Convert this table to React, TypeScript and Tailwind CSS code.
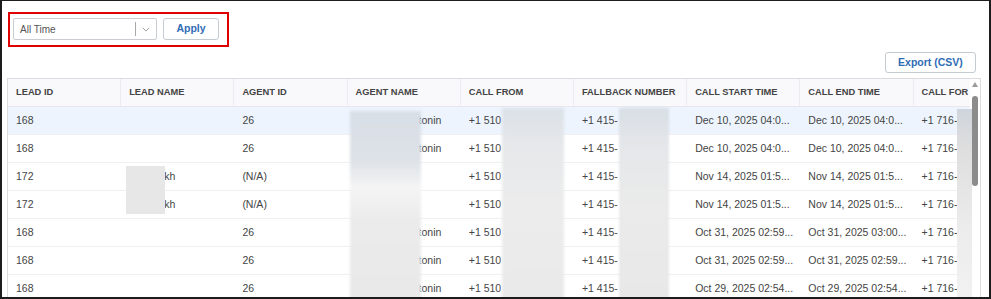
import React from "react";

const headers = [
  "LEAD ID",
  "LEAD NAME",
  "AGENT ID",
  "AGENT NAME",
  "CALL FROM",
  "FALLBACK NUMBER",
  "CALL START TIME",
  "CALL END TIME",
  "CALL FOR",
];

type Row = {
  leadId: string;
  leadName: string;
  agentId: string;
  agentName: string;
  start: string;
  end: string;
};

const rows: Row[] = [
  { leadId: "168", leadName: "", agentId: "26", agentName: "tonin", start: "Dec 10, 2025 04:0...", end: "Dec 10, 2025 04:0..." },
  { leadId: "168", leadName: "", agentId: "26", agentName: "tonin", start: "Dec 10, 2025 04:0...", end: "Dec 10, 2025 04:0..." },
  { leadId: "172", leadName: "kh", agentId: "(N/A)", agentName: "", start: "Nov 14, 2025 01:5...", end: "Nov 14, 2025 01:5..." },
  { leadId: "172", leadName: "kh", agentId: "(N/A)", agentName: "", start: "Nov 14, 2025 01:5...", end: "Nov 14, 2025 01:5..." },
  { leadId: "168", leadName: "", agentId: "26", agentName: "tonin", start: "Oct 31, 2025 02:59...", end: "Oct 31, 2025 03:00..." },
  { leadId: "168", leadName: "", agentId: "26", agentName: "tonin", start: "Oct 31, 2025 02:59...", end: "Oct 31, 2025 02:59..." },
  { leadId: "168", leadName: "", agentId: "26", agentName: "tonin", start: "Oct 29, 2025 02:54...", end: "Oct 29, 2025 02:54..." },
];

function Cell({ children }: { children?: React.ReactNode }) {
  return (
    <div className="flex items-center px-[8px] whitespace-nowrap overflow-visible">{children}</div>
  );
}

export default function App() {
  return (
    <div className="w-[991px] h-[299px] overflow-hidden bg-white border-[#1c1c1c] border-t border-l-2 border-r-2 border-b-2 font-['Liberation_Sans',Arial,sans-serif] text-[#444]">
      {/* Filter bar */}
      <div className="pt-[11px] pl-[6px]">
        <div className="inline-flex items-center gap-[6px] border-2 border-[#e10000] pl-[3px] pr-[8px] pt-[4px] pb-[5px]">
          <div className="w-[144px] h-[22px] border border-[#c9cdd2] rounded-[2px] flex items-center bg-white">
            <span className="flex-1 pl-[6px] text-[10px] text-[#555]">All Time</span>
            <div className="w-px h-[14px] bg-[#a8a8a8]" />
            <div className="w-[20px] flex items-center justify-center">
              <svg width="8" height="5" viewBox="0 0 8 5" fill="none">
                <path d="M0.8 0.8 L4 4 L7.2 0.8" stroke="#a0a0a0" strokeWidth="1" />
              </svg>
            </div>
          </div>
          <button className="w-[56px] h-[22px] border border-[#c5cbd3] rounded-[3px] bg-white text-[10.5px] font-bold text-[#2f6db5] flex items-center justify-center">
            Apply
          </button>
        </div>
      </div>

      {/* Export */}
      <div className="flex justify-end pr-[13px] mt-[5px]">
        <button className="w-[91px] h-[21px] border border-[#c5cbd3] rounded-[3px] bg-white text-[10.5px] font-bold text-[#2f6db5] flex items-center justify-center">
          Export (CSV)
        </button>
      </div>

      {/* Table */}
      <div className="relative mt-[5px] ml-[5px] w-[974px] h-[230px] border-t border-l border-r border-[#dcdce0] flex overflow-hidden">
        <div className="flex-1 overflow-hidden">
          <div className="grid grid-cols-[repeat(9,113.2px)] h-[28px] bg-[#f9f9fb] border-b border-[#e8e8ec] text-[9.3px] font-bold text-[#444]">
            {headers.map((h) => (
              <div key={h} className="flex items-center px-[8px] whitespace-nowrap border-r border-[#ececf0]">
                {h}
              </div>
            ))}
          </div>
          {rows.map((r, i) => (
            <div
              key={i}
              className={
                "grid grid-cols-[repeat(9,113.2px)] h-[28px] border-b border-[#f0f0f2] text-[10.5px] text-[#444] " +
                (i === 0 ? "bg-[#edf4fd]" : "bg-white")
              }
            >
              <Cell>{r.leadId}</Cell>
              <Cell>
                {r.leadName ? (
                  <>
                    <span className="inline-block w-[35px]" />
                    {r.leadName}
                  </>
                ) : null}
              </Cell>
              <Cell>{r.agentId}</Cell>
              <Cell>
                {r.agentName ? (
                  <>
                    <span className="inline-block w-[63px]" />
                    {r.agentName}
                  </>
                ) : null}
              </Cell>
              <Cell>+1 510</Cell>
              <Cell>+1 415-</Cell>
              <Cell>{r.start}</Cell>
              <Cell>{r.end}</Cell>
              <Cell>+1 716-</Cell>
            </div>
          ))}
        </div>

        {/* Scrollbar */}
        <div className="w-[10px] relative bg-white">
          <svg className="absolute left-[2px] top-[3px]" width="6" height="5" viewBox="0 0 6 5">
            <path d="M3 0 L6 5 L0 5 Z" fill="#9a9a9a" />
          </svg>
          <div className="absolute left-[2px] top-[17px] w-[6px] h-[90px] rounded-[3px] bg-[#8c8c8c]" />
        </div>

        {/* Redaction overlays */}
        <div className="absolute left-[118px] top-[87px] w-[39px] h-[48px] bg-[#e7e7e7]" />
        <div className="absolute left-[342px] top-[32px] w-[71px] h-[200px] blur-[1.5px] bg-[linear-gradient(to_bottom,#d8dee5_0%,#dde2e8_25%,#f4f4f4_38%,#ebebeb_55%,#e8e8e8_100%)]" />
        <div className="absolute left-[494px] top-[29px] w-[62px] h-[200px] blur-[1.5px] bg-[linear-gradient(to_bottom,#dbe1e8_0%,#e6e8ea_20%,#ececec_50%,#e9e9e9_100%)]" />
        <div className="absolute left-[611px] top-[29px] w-[50px] h-[200px] blur-[1px] bg-[linear-gradient(to_bottom,#d9dfe6_0%,#e5e7ea_20%,#ebebeb_50%,#e8e8e8_100%)]" />
        <div className="absolute left-[949px] top-[30px] w-[15px] h-[200px] bg-[linear-gradient(to_bottom,#cfd5dc_0%,#dedede_20%,#ececec_60%,#f2f2f2_100%)]" />
      </div>
    </div>
  );
}
